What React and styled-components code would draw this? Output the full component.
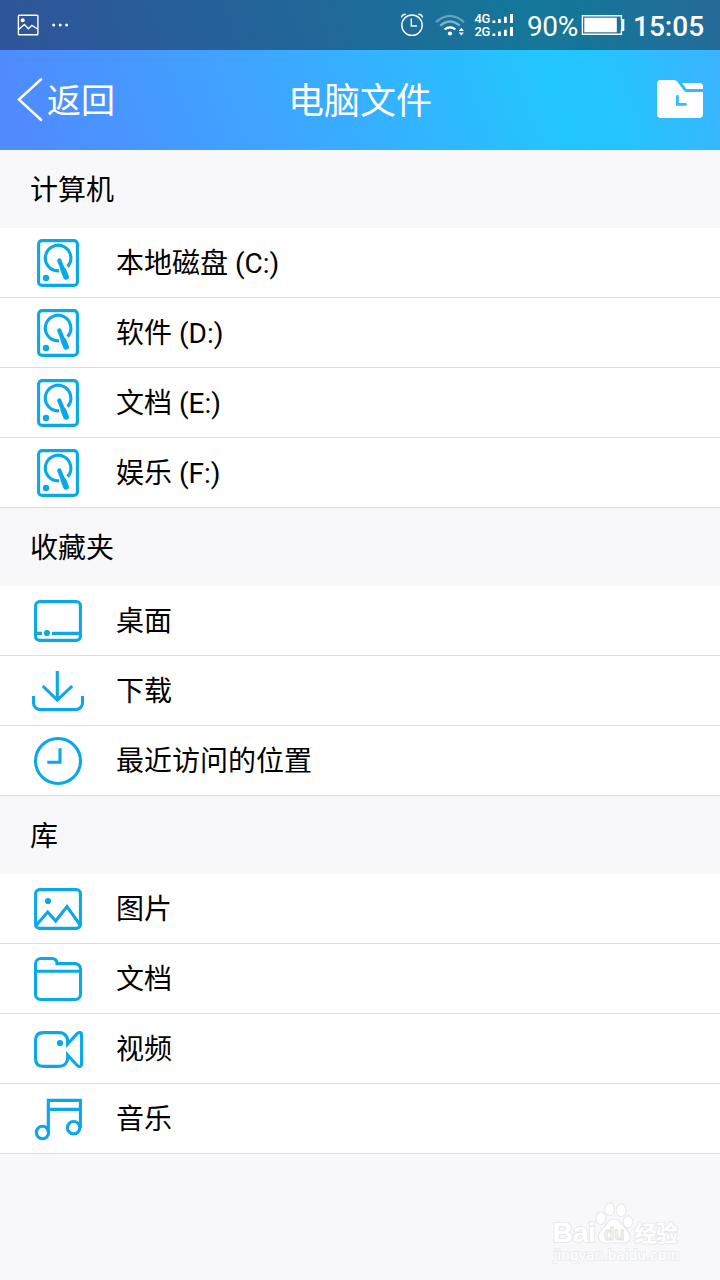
import React from 'react'
import styled, { createGlobalStyle } from 'styled-components'

const GlobalStyle = createGlobalStyle`
  * {
    box-sizing: border-box;
  }

  body {
    margin: 0;
    background: #f8f8fb;
    color: #000;
    font-family: Roboto, 'Noto Sans CJK SC', sans-serif;
  }
`

// icon paths share a 60x69 box, the same height as a row without its border
const icons = {
  disk: (
    <>
      <rect x="10.6" y="12.6" width="38.8" height="44.8" rx="3.5" />
      <path d="M31 42.8A12.8 12.8 0 1 1 39.6 38.6" />
      <path d="M31.3 32.5L38 49" strokeWidth="4.4" strokeLinecap="round" />
      <path d="M35.5 42.5L38 48.8" strokeWidth="5.8" strokeLinecap="round" />
      <Dot cx="18" cy="50" r="3.2" />
    </>
  ),
  desktop: (
    <>
      <rect x="7.6" y="15.6" width="44.8" height="38.8" rx="4" />
      <path d="M7 47.4h7M24 47.4h29" />
      <Dot cx="19" cy="47" r="3.1" />
    </>
  ),
  download: (
    <>
      <path d="M29.3 15V44.5M14.8 30L29.3 44.2L44.2 30" />
      <path d="M5.5 40v7a6.6 6.6 0 0 0 6.6 6.6h35.8a6.6 6.6 0 0 0 6.6-6.6v-7" />
    </>
  ),
  recent: (
    <>
      <circle cx="30" cy="35" r="22.5" />
      <path d="M32 22.3V36.3H19.3" />
    </>
  ),
  picture: (
    <>
      <rect x="7.6" y="15.6" width="44.8" height="38.8" rx="4" />
      <path d="M8 51.5L19.7 38L27.7 47L39 32.5L52.5 51.5" />
      <Dot cx="20" cy="27" r="3.1" />
    </>
  ),
  folder: (
    <>
      <path d="M7.5 50.5V20a5.5 5.5 0 0 1 5.5-5.5h11c3.3 0 5 1.9 5 5.1H47a5.5 5.5 0 0 1 5.5 5.5v25.2a5.2 5.2 0 0 1-5.2 5.2H12.7a5.2 5.2 0 0 1-5.2-5.2Z" />
      <path d="M8 27.2H52" />
    </>
  ),
  video: (
    <>
      <path d="M15.5 18.6H31Q38 18.6 39.6 25.5V30L49 19.7C51 17.6 53.6 18.2 53.6 21.5V49.5C53.6 52.8 51 53.4 49 51.3L39.6 41V45.5Q38 52.4 31 52.4H15.5Q7.5 52.4 7.5 44.5V26.5Q7.5 18.6 15.5 18.6Z" />
      <Dot cx="32" cy="29" r="3.1" />
    </>
  ),
  music: (
    <>
      <circle cx="14.5" cy="48.5" r="6.2" />
      <circle cx="45.6" cy="43.7" r="6.2" />
      <path d="M20.3 49V16.4H52.4V44M20.3 25.4H52.4" />
    </>
  ),
}

const sections = [
  {
    title: '计算机',
    items: [
      { icon: 'disk', name: '本地磁盘 (C:)' },
      { icon: 'disk', name: '软件 (D:)' },
      { icon: 'disk', name: '文档 (E:)' },
      { icon: 'disk', name: '娱乐 (F:)' },
    ],
  },
  {
    title: '收藏夹',
    items: [
      { icon: 'desktop', name: '桌面' },
      { icon: 'download', name: '下载' },
      { icon: 'recent', name: '最近访问的位置' },
    ],
  },
  {
    title: '库',
    items: [
      { icon: 'picture', name: '图片' },
      { icon: 'folder', name: '文档' },
      { icon: 'video', name: '视频' },
      { icon: 'music', name: '音乐' },
    ],
  },
]

function Dot(props) {
  return <circle fill="#0aa8e6" stroke="none" {...props} />
}

const Status = () => (
  <StatusBar>
    <StatusIcon width="60" height="50" viewBox="0 0 60 50">
      <rect x="1.4" y="15.3" width="19.5" height="19.4" rx="0.8" />
      <path d="M1.6 29.5L7.4 24.5L11.4 28.7L14.9 25.3L20.6 29" />
      <g fill="#fff" stroke="none">
        <circle cx="5.7" cy="20.3" r="2" />
        <circle cx="36.7" cy="25" r="1.5" />
        <circle cx="43.2" cy="25" r="1.5" />
        <circle cx="49.6" cy="25" r="1.5" />
      </g>
    </StatusIcon>
    <StatusRight>
      <StatusIcon width="127" height="50" viewBox="400 0 127 50">
        <circle cx="412" cy="25.2" r="10.2" />
        <path d="M411.3 18.5V26H417M401.5 17.5Q402 14.5 405.8 14.3M418.3 14.3Q422 14.5 422.5 17.5" />
        <g strokeWidth="2.2">
          <path d="M436 22.2Q450 9.5 464 22.2" opacity="0.35" />
          <path d="M440.2 25.7Q450 17.3 459.8 25.7" opacity="0.45" />
          <path d="M444.6 29.4Q450 25.3 455.4 29.4" />
        </g>
        <g fill="#fff" stroke="none">
          <circle cx="450" cy="33.5" r="2.1" />
          <path d="M458.7 31L461.3 27.8L463.9 31ZM458.7 32.4H463.9L461.3 35.6Z" />
          <path d="M492.5 20.5h2.8V23h-2.8zM498 19h2.8v4H498zM504 16.7h2.8V23H504zM510 14h3v9h-3z" />
          <path d="M492.5 33.5h2.8V36h-2.8zM498 31.5h2.8V36H498zM504 29.7h2.8V36H504zM510 27h3v9h-3z" />
          <NetText x="474.5" y="23.4">4G</NetText>
          <NetText x="474.5" y="36.3">2G</NetText>
        </g>
      </StatusIcon>
      <Percent>90%</Percent>
      <StatusIcon width="44" height="50" viewBox="581 0 44 50">
        <path d="M582.4 15.7H621.4V19.7H623.6V30.3H621.4V34.3H582.4Z" />
        <rect x="584.3" y="17.7" width="32.5" height="14.6" fill="#fff" stroke="none" />
        <path d="M621.2 19.5h2.7v11h-2.7z" fill="#fff" stroke="none" />
      </StatusIcon>
      <Clock>15:05</Clock>
    </StatusRight>
  </StatusBar>
)

const Row = ({ icon, name }) => (
  <RowItem>
    <RowIcon viewBox="0 0 60 69">{icons[icon]}</RowIcon>
    <RowName>{name}</RowName>
  </RowItem>
)

const Watermark = () => (
  <WatermarkMark viewBox="0 0 140 70">
    <g fill="#fff" stroke="#e8e8eb" strokeWidth="1.1">
      <ellipse cx="48.8" cy="17.2" rx="4.8" ry="6.2" />
      <ellipse cx="57.8" cy="8.2" rx="4.8" ry="6.6" />
      <ellipse cx="69.2" cy="9.2" rx="4.9" ry="6.4" />
      <ellipse cx="76" cy="20.8" rx="4.9" ry="6.1" />
      <path d="M62 18C68 18 69 23 74 28C81 35 79 42 71.5 42H53.5C46 42 44 35 50 28.5C55 23.5 56 18 62 18Z" />
      <g paintOrder="stroke" strokeWidth="2">
        <WatermarkText x="0.5" y="41" size={28.5} bold textLength="43.5">Bai</WatermarkText>
        <WatermarkText x="82.5" y="39.5" size={22} bold textLength="43.5">经验</WatermarkText>
        <WatermarkText x="2" y="58.5" size={14.5} stroke="#ececef" textLength="125">
          jingyan.baidu.com
        </WatermarkText>
      </g>
    </g>
    <g fill="#f6f6f9" stroke="#dfdfe2" strokeWidth="0.9">
      <WatermarkText x="52" y="38.5" size={18} bold textLength="20.5" lengthAdjust="spacingAndGlyphs">
        du
      </WatermarkText>
    </g>
  </WatermarkMark>
)

class App extends React.Component {
  render() {
    return (
      <Screen>
        <GlobalStyle />
        <Top>
          <Status />
          <Header>
            <Back>
              <svg width="30" height="50" viewBox="0 0 30 50" fill="none" stroke="#fff" strokeWidth="2.6">
                <path d="M24 4.4L2 24.6L24 44.8" strokeLinecap="round" />
              </svg>
              <BackLabel>返回</BackLabel>
            </Back>
            <Title>电脑文件</Title>
            <Recent>
              <svg width="46" height="38" viewBox="0 0 46 38">
                <path
                  fill="#fff"
                  d="M4 0H17Q19 0 20.5 1.8L27 10.7Q28 12 29.5 12H46V34Q46 38 42 38H4Q0 38 0 34V4Q0 0 4 0ZM25.2 3H42.5Q46 3 46 6.5V9H29.5Z"
                />
                <path
                  d="M20.4 16.3V24.3H28.6"
                  fill="none"
                  stroke="#32bdff"
                  strokeWidth="2.8"
                  strokeLinecap="round"
                />
              </svg>
            </Recent>
          </Header>
        </Top>
        {sections.map(section => (
          <section key={section.title}>
            <SectionTitle>{section.title}</SectionTitle>
            {section.items.map(item => (
              <Row key={item.name} {...item} />
            ))}
          </section>
        ))}
        <Watermark />
      </Screen>
    )
  }
}

const Screen = styled.div`
  position: relative;
  width: 720px;
  height: 1280px;
  overflow: hidden;
`

const Top = styled.div`
  color: #fff;
  background: linear-gradient(70deg, #508aff 3%, #40a3ff 34%, #2fb8ff 59%, #22c6ff 74%, #24c4ff 81%, #3db3ff 98%);
`

const StatusBar = styled.div`
  display: flex;
  justify-content: space-between;
  height: 50px;
  padding: 0 16px 0 17px;
  background: rgba(0, 0, 0, 0.4);
`

const StatusRight = styled.div`
  display: flex;
  line-height: 53px;
`

const StatusIcon = styled.svg`
  flex: none;
  fill: none;
  stroke: #fff;
  stroke-width: 1.4;
`

const NetText = styled.text`
  font-size: 13px;
  font-weight: 500;
  letter-spacing: -0.3px;
`

const Percent = styled.span`
  width: 54px;
  font-size: 28px;
  letter-spacing: -0.4px;
`

const Clock = styled.span`
  width: 71px;
  margin-left: 8px;
  font-size: 28px;
  font-weight: 500;
  white-space: nowrap;
`

const Header = styled.div`
  display: grid;
  grid-template-columns: 1fr auto 1fr;
  align-items: center;
  height: 100px;
  padding: 0 17px;
`

const Back = styled.div`
  display: flex;
  align-items: center;
`

const BackLabel = styled.span`
  padding-bottom: 4px;
  font-size: 34px;
`

const Title = styled.div`
  padding-bottom: 5px;
  font-size: 36px;
`

const Recent = styled.div`
  display: flex;
  justify-content: flex-end;
  padding-bottom: 2px;
`

const SectionTitle = styled.div`
  height: 78px;
  padding-left: 30px;
  font-size: 28px;
  line-height: 82px;
`

const RowItem = styled.div`
  display: flex;
  align-items: center;
  height: 70px;
  padding-left: 28px;
  background: #fff;
  border-bottom: 1px solid #dedee0;
`

const RowIcon = styled.svg`
  flex: none;
  width: 60px;
  height: 69px;
  margin-right: 28px;
  fill: none;
  stroke: #0aa8e6;
  stroke-width: 3.1;
`

const RowName = styled.span`
  padding-bottom: 4px;
  font-size: 28px;
`

// sits over the bottom right corner of the list
const WatermarkMark = styled.svg`
  position: absolute;
  left: 552px;
  top: 1201px;
  width: 140px;
  height: 70px;
`

const WatermarkText = styled.text.withConfig({
  shouldForwardProp: prop => !['size', 'bold'].includes(prop),
})`
  font-family: 'Liberation Sans', 'Noto Sans CJK SC', sans-serif;
  font-size: ${props => props.size}px;
  font-weight: ${props => (props.bold ? 700 : 400)};
`

export default App
